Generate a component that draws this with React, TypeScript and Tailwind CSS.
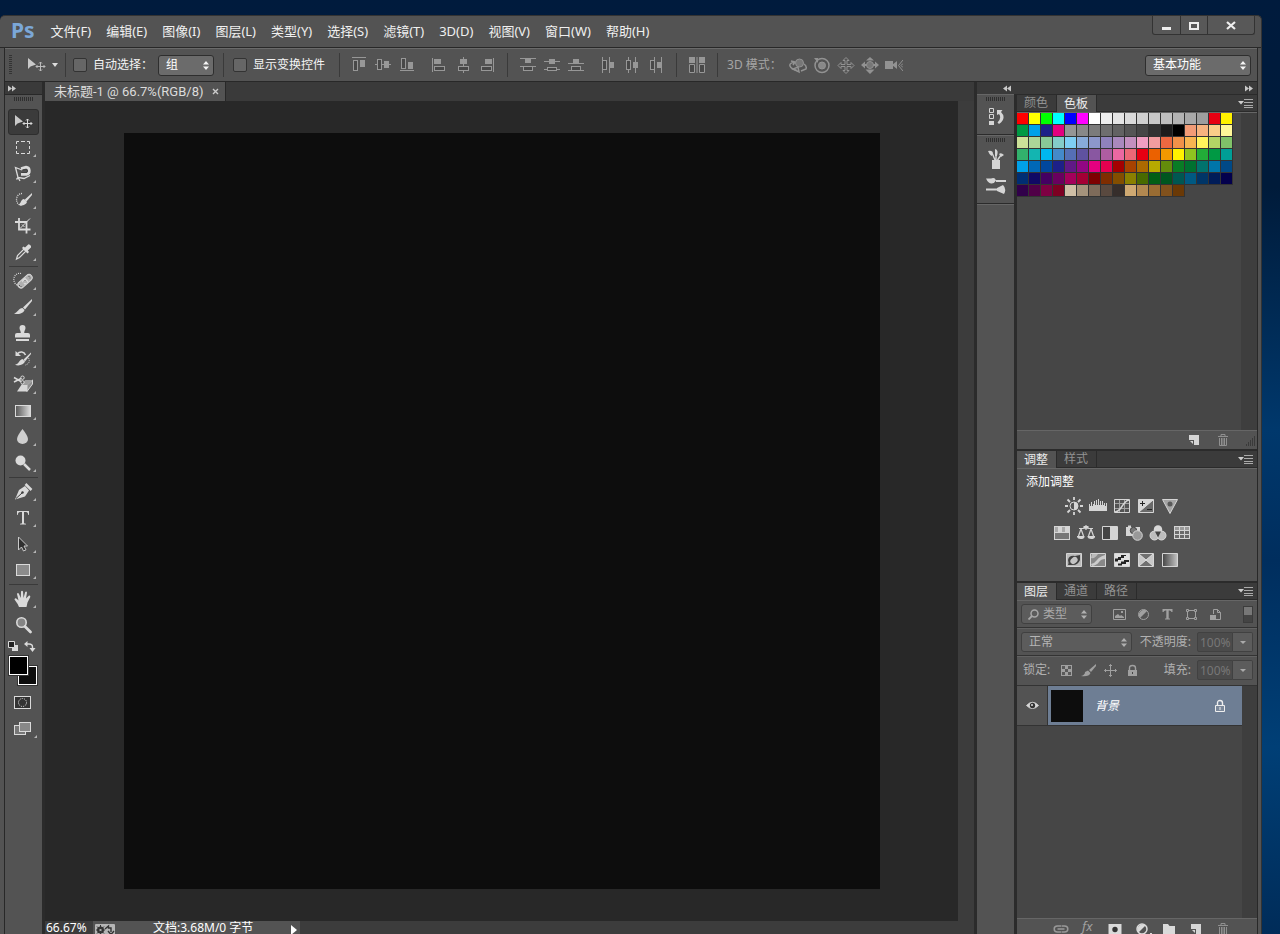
import { useState } from "react";
import type { ReactNode } from "react";

type Rect = [number, number, number, number];

interface AlignGlyph {
	label: string;
	bars: Rect[];
	box: Rect;
	fill: Rect;
}

const menus = [
	"文件(F)",
	"编辑(E)",
	"图像(I)",
	"图层(L)",
	"类型(Y)",
	"选择(S)",
	"滤镜(T)",
	"3D(D)",
	"视图(V)",
	"窗口(W)",
	"帮助(H)",
];

const swatches = [
	"ff0000 ffff00 00ff00 00ffff 0000ff ff00ff ffffff ededed e4e4e4 dadada d0d0d0 c8c8c8 bfbfbf b3b3b3 a9a9a9 9e9e9e e60012 fff100",
	"009944 00a0e9 1d2088 e4007f 959595 888888 7b7b7b 6e6e6e 626262 555555 464646 323232 1c1c1c 000000 f29b76 f6b37f facd89 fff799",
	"cce198 acd598 89c997 84ccc9 7ecef4 88abda 8c97cb 8f82bc aa89bd c490bf f19ec2 f29c9f eb6841 f19149 f8b551 fff45c b3d465 80c269",
	"32b16c 13b5b1 00b7ee 448aca 556fb5 5f52a0 8957a1 ae5da1 ea68a2 eb6877 e60012 eb6100 f39800 fff100 8fc31f 22ac38 009944 009e96",
	"00a0e9 0068b7 00479d 1d2088 601986 920783 e4007f e5004f a40000 a84200 ac6a00 b7aa00 638c0b 097c25 007130 00736d 0075a9 004986",
	"002e73 100964 440062 6a005f a4005b a40035 7d0000 7f2d00 834e00 8a8000 486a00 005e15 00561f 005752 005982 003567 001c58 03004c",
	"31004a 500047 7e0043 7d0022 cfbfa6 a4937c 7e6b5a 59493f 362e2b cfa972 b28850 996c33 81511c 6a3906",
]
	.join(" ")
	.split(" ");

const alignGroups: AlignGlyph[][] = [
	[
		{ label: "顶对齐", bars: [[1, 0, 14, 1]], box: [2, 3, 5, 11], fill: [9, 3, 5, 7] },
		{ label: "垂直居中对齐", bars: [[0, 7, 16, 1]], box: [2, 2, 5, 11], fill: [9, 4, 5, 7] },
		{ label: "底对齐", bars: [[1, 13, 14, 1]], box: [2, 1, 5, 11], fill: [9, 5, 5, 7] },
	],
	[
		{ label: "左对齐", bars: [[1, 1, 1, 14]], box: [3, 9, 11, 5], fill: [3, 2, 7, 5] },
		{ label: "水平居中对齐", bars: [[8, 0, 1, 16]], box: [3, 9, 11, 5], fill: [5, 2, 7, 5] },
		{ label: "右对齐", bars: [[14, 1, 1, 14]], box: [2, 9, 11, 5], fill: [6, 2, 7, 5] },
	],
	[
		{ label: "按顶分布", bars: [[0, 1, 16, 1], [0, 9, 16, 1]], box: [3, 9, 10, 5], fill: [5, 2, 6, 4] },
		{ label: "垂直居中分布", bars: [[0, 4, 16, 1], [0, 12, 16, 1]], box: [3, 10, 10, 4], fill: [5, 2, 6, 5] },
		{ label: "按底分布", bars: [[0, 6, 16, 1], [0, 13, 16, 1]], box: [3, 9, 10, 5], fill: [5, 2, 6, 4] },
	],
	[
		{ label: "按左分布", bars: [[2, 0, 1, 16], [9, 0, 1, 16]], box: [2, 3, 5, 10], fill: [9, 5, 5, 6] },
		{ label: "水平居中分布", bars: [[4, 0, 1, 16], [11, 0, 1, 16]], box: [2, 3, 5, 10], fill: [9, 5, 5, 6] },
		{ label: "按右分布", bars: [[6, 0, 1, 16], [13, 0, 1, 16]], box: [2, 3, 5, 10], fill: [9, 5, 5, 6] },
	],
];

const selectClass =
	"w-full appearance-none rounded-[3px] border pr-4 text-xs leading-4 outline-none";

function Svg({ children, w = 20, h = 20 }: { children: ReactNode; w?: number; h?: number }) {
	return (
		<svg width={w} height={h} viewBox={`0 0 ${w} ${h}`} fill="none" className="block shrink-0" aria-hidden="true">
			{children}
		</svg>
	);
}

function MoveCross({ x, y, r = 4.5 }: { x: number; y: number; r?: number }) {
	return (
		<g transform={`translate(${x} ${y})`} stroke="currentColor" strokeWidth="1">
			<path d={`M0 ${-r}V${r}M${-r} 0H${r}`} />
			<path
				d={`M-1.5 ${-r + 1.5}L0 ${-r}L1.5 ${-r + 1.5}M-1.5 ${r - 1.5}L0 ${r}L1.5 ${r - 1.5}M${-r + 1.5} -1.5L${-r} 0L${-r + 1.5} 1.5M${r - 1.5} -1.5L${r} 0L${r - 1.5} 1.5`}
			/>
		</g>
	);
}

function AlignIcon({ bars, box, fill }: AlignGlyph) {
	return (
		<Svg w={16} h={16}>
			{bars.map((b) => (
				<rect key={b.join()} x={b[0]} y={b[1]} width={b[2]} height={b[3]} fill="#979797" />
			))}
			<rect x={box[0] + 0.5} y={box[1] + 0.5} width={box[2] - 1} height={box[3] - 1} fill="#484848" stroke="#979797" />
			<rect x={fill[0]} y={fill[1]} width={fill[2]} height={fill[3]} fill="#979797" />
		</Svg>
	);
}

function UpDown() {
	return (
		<span className="pointer-events-none absolute inset-y-0 right-[5px] flex items-center">
			<Svg w={6} h={9}>
				<path d="M3 0L6 3.5H0zM3 9L6 5.5H0z" fill="currentColor" />
			</Svg>
		</span>
	);
}

function Divider() {
	return <span className="h-6 w-px bg-[#3a3a3a]" />;
}

function Grip() {
	return (
		<div className="flex h-[15px] items-start justify-center pt-[2px]">
			<Svg w={20} h={4}>
				<path d="M0 2H20" stroke="#2f2f2f" strokeWidth="4" strokeDasharray="1 1" />
			</Svg>
		</div>
	);
}

const toolGroups: { label: string; plain?: boolean; icon: ReactNode }[][] = [
	[
		{
			label: "移动工具",
			plain: true,
			icon: (
				<>
					<path d="M2 3V14L4.500 11.500L10 9.500z" fill="#c9c9c9" />
					<MoveCross x={14.5} y={11.5} />
				</>
			),
		},
		{
			label: "矩形选框工具",
			icon: (
				<path
					d="M3.500 6V3.500H6M8 3.500h4M14 3.500h2.500V6M16.500 8v3M16.500 13v2.500H14M12 15.500H8M6 15.500H3.500V13M3.500 11V8"
					stroke="currentColor"
				/>
			),
		},
		{
			label: "磁性套索工具",
			icon: (
				<>
					<path d="M9 6L2.500 3.500L5 13.500L11 14.500L17 11.500M5 13.500L7 17M5 13.500L3.500 15.500" stroke="currentColor" strokeWidth="1.300" />
					<path d="M8 10.300H13.500A3.600 3.600 0 0 0 13 3.200L8 4.500" stroke="currentColor" strokeWidth="2.800" />
					<path d="M8.500 8.500H13A1.500 1.500 0 0 0 13 5.500L10 6" stroke="#404040" />
				</>
			),
		},
		{
			label: "快速选择工具",
			icon: (
				<>
					<path d="M9 3.500A5.500 6 0 1 0 9 15.500" stroke="currentColor" strokeDasharray="1 1" strokeWidth="1.300" />
					<path d="M19 3L13 8.500L11.500 10L13.500 11.500L19 5z" fill="currentColor" />
					<path d="M11 9L14 12C13 15 8 16.500 5.500 14.500C8 14 7.500 9.500 11 9z" fill="currentColor" />
				</>
			),
		},
		{
			label: "裁剪工具",
			icon: (
				<>
					<path d="M6 2V13.500H17.500M2 6H13.500V17.500" stroke="currentColor" strokeWidth="1.800" />
					<path d="M7 12.500L17 2.500M9 8.500L11.500 11" stroke="currentColor" />
				</>
			),
		},
		{
			label: "吸管工具",
			icon: (
				<>
					<path d="M3.500 17L4.500 13.500L11 7L13 9L6.500 15.500z" stroke="currentColor" strokeWidth="1.200" />
					<path d="M9 6L14.500 11.500L16 10L14.800 8.500L18 5.500Q18.500 3 15.500 2.300L12 5.500L10.500 4.500z" fill="currentColor" />
				</>
			),
		},
	],
	[
		{
			label: "污点修复画笔工具",
			icon: (
				<>
					<path d="M8 2.500A5 5.500 0 1 0 5 14.500" stroke="currentColor" strokeDasharray="1 1" strokeWidth="1.200" />
					<rect x="3.500" y="7" width="17" height="6.400" rx="3.200" transform="rotate(-42 12 10.200)" fill="#b0b0b0" stroke="#d8d8d8" />
					<rect x="9.500" y="7.500" width="5" height="5.400" transform="rotate(-42 12 10.200)" fill="#d8d8d8" />
					<path d="M12 9v1M13 10.500v1M11 10.500v1M6.500 14v1M16 5v1M8 15v1M17 6.500v1" stroke="#555" />
				</>
			),
		},
		{
			label: "画笔工具",
			icon: (
				<>
					<path d="M19 2L10 10.500L12 12.500L19 4z" fill="currentColor" />
					<path d="M9.500 11L11.500 13C11 16 6 18 1 16.500C5 15.500 5.500 11 9.500 11z" fill="currentColor" />
				</>
			),
		},
		{
			label: "仿制图章工具",
			icon: (
				<path d="M9.500 2a3 3 0 0 1 3 3c0 2-1.300 2.500-1.300 5H15a2 2 0 0 1 2 2v2.500H2V12a2 2 0 0 1 2-2h3.800c0-2.500-1.300-3-1.300-5a3 3 0 0 1 3-3zM3 16h13v2H3z" fill="currentColor" />
			),
		},
		{
			label: "历史记录画笔工具",
			icon: (
				<>
					<path d="M4 5C7 2 11 2.500 12.500 6" stroke="currentColor" strokeWidth="1.600" />
					<path d="M2.500 2V7H8z" fill="currentColor" />
					<path d="M18 3.500L10.500 10.500L12 12.500L18 5z" fill="currentColor" />
					<path d="M9.500 10L12 12.500C11 15.500 6 17.500 2 15.800C6 15 6 11 9.500 10z" fill="currentColor" />
					<path d="M15.500 9Q18 14 12.500 16" stroke="currentColor" strokeDasharray="1 1" />
				</>
			),
		},
		{
			label: "背景橡皮擦工具",
			icon: (
				<>
					<path d="M9 9H19L14 16.500H4z" fill="#d8d8d8" />
					<path d="M14 10L19.500 5V9L14 16.500z" fill="#8e8e8e" stroke="#d8d8d8" />
					<path d="M12 5H18L19.500 5L14.500 10H9z" fill="#9c9c9c" />
					<path d="M1 2.500L8 6.500M1 7L8 3.500" stroke="currentColor" strokeWidth="1.500" />
					<circle cx="9.500" cy="2.700" r="1.700" stroke="currentColor" />
					<circle cx="9.500" cy="7.300" r="1.700" stroke="currentColor" />
				</>
			),
		},
		{
			label: "渐变工具",
			icon: (
				<>
					<defs>
						<linearGradient id="toolGradient">
							<stop stopColor="#555" />
							<stop offset="1" stopColor="#ddd" />
						</linearGradient>
					</defs>
					<rect x="2.500" y="4.500" width="15" height="11" fill="url(#toolGradient)" stroke="currentColor" />
				</>
			),
		},
		{ label: "模糊工具", icon: <path d="M9.500 2Q15 9 15 12A5.500 5 0 0 1 4 12Q4 9 9.500 2z" fill="#cfcfcf" /> },
		{
			label: "减淡工具",
			icon: (
				<>
					<circle cx="7.500" cy="7.500" r="5" fill="currentColor" />
					<path d="M11 11L17 17" stroke="currentColor" strokeWidth="2.500" />
				</>
			),
		},
	],
	[
		{
			label: "钢笔工具",
			icon: (
				<>
					<path d="M2 17.500L6 8L12 4L16 8.500L12 14.500z" fill="currentColor" />
					<path d="M3 16.500L9 11" stroke="#3a3a3a" />
					<circle cx="9.500" cy="10.500" r="1.200" fill="#3a3a3a" />
					<path d="M12.500 2L18.500 8" stroke="currentColor" strokeWidth="2.500" />
				</>
			),
		},
		{
			label: "横排文字工具",
			icon: <path d="M4 3H16V7H15.300Q15 4 13 4H11V15Q11 15.700 13 15.700V16.500H7V15.700Q9 15.700 9 15V4H7Q5 4 4.700 7H4z" fill="currentColor" />,
		},
		{
			label: "路径选择工具",
			icon: <path d="M5.500 3V16L8.500 13L10.500 17L13 15.800L11 12H14.500z" fill="#303030" stroke="#c9c9c9" />,
		},
		{ label: "矩形工具", icon: <rect x="3.500" y="4.500" width="13" height="11" fill="#8c8c8c" stroke="currentColor" /> },
	],
	[
		{
			label: "抓手工具",
			icon: (
				<path
					d="M6 18Q5 15 1.500 10.500Q2 8.500 4 10L5.500 11.500L4 5Q4.500 3.500 5.800 4.500L7.800 9L8 2.500Q9 1 10 2.500L10.500 9L12.200 3Q13.500 2 14 3.500L13 9.500L16 6.500Q17.500 6 17.300 8L14.500 13.500L13.500 18z"
					fill="currentColor"
				/>
			),
		},
		{
			label: "缩放工具",
			plain: true,
			icon: (
				<>
					<circle cx="8.500" cy="7.500" r="4.700" fill="#858585" stroke="currentColor" strokeWidth="1.600" />
					<path d="M12 11.500L17.500 17" stroke="currentColor" strokeWidth="2.800" strokeLinecap="round" />
				</>
			),
		},
	],
];

function Toolbox() {
	const [tool, setTool] = useState("移动工具");

	return (
		<aside className="w-[37px] shrink-0 bg-[#535353]">
			<div className="flex h-[13px] items-center border-b border-[#282828] bg-[#3a3a3a] pl-[3px] text-[#c8c8c8]">
				<button type="button" aria-label="展开工具栏">
					<Svg w={8} h={7}>
						<path d="M0 0.500L4 3.500L0 6.500zM4 0.500L8 3.500L4 6.500z" fill="currentColor" />
					</Svg>
				</button>
			</div>
			<Grip />
			<div className="mt-[-1px] flex flex-col items-center text-[#dadada]">
				{toolGroups.map((group, i) => (
					<div key={group[0].label} className="flex flex-col items-center">
						{i > 0 && <span className="my-px h-px w-[29px] bg-[#3a3a3a]" />}
						{group.map((item) => (
							<button
								key={item.label}
								type="button"
								aria-label={item.label}
								aria-pressed={tool === item.label}
								onClick={() => setTool(item.label)}
								className={`relative flex h-[26px] w-[31px] items-center justify-center rounded-[3px] border pr-px ${
									tool === item.label ? "border-[#2e2e2e] bg-[#3b3b3b]" : "border-transparent"
								}`}
							>
								<Svg>{item.icon}</Svg>
								{!item.plain && (
									<span className="absolute bottom-[3px] right-[2px]">
										<Svg w={3} h={3}>
											<path d="M3 0V3H0z" fill="#b5b5b5" />
										</Svg>
									</span>
								)}
							</button>
						))}
					</div>
				))}
				<div className="flex h-[18px] w-[31px] items-start justify-between pr-[3px] pt-[3px]">
					<button type="button" aria-label="默认前景色和背景色">
						<Svg w={11} h={11}>
							<path d="M4 4H10V10H4z" fill="#dadada" />
							<path d="M0.500 0.500H6.500V6.500H0.500z" fill="#222" stroke="#dadada" />
						</Svg>
					</button>
					<button type="button" aria-label="切换前景色和背景色">
						<Svg w={12} h={11}>
							<path d="M2 3H5Q8.500 3 8.500 6V8" stroke="#dadada" strokeWidth="1.400" />
							<path d="M3.500 0V6L0 3zM5.500 7H11.500L8.500 11z" fill="#dadada" />
						</Svg>
					</button>
				</div>
				<div className="relative h-[31px] w-[31px]">
					<button type="button" aria-label="背景色" className="absolute left-[10px] top-[10px] h-[19px] w-[19px] border border-white bg-[#0d0d0d] outline outline-[#333]" />
					<button type="button" aria-label="前景色" className="absolute left-px top-0 h-[19px] w-[19px] border border-white bg-black outline outline-[#333]" />
				</div>
				<button type="button" aria-label="以快速蒙版模式编辑" className="mt-[2px] flex h-[26px] w-[31px] items-center justify-center pr-[3px]">
					<Svg w={17} h={13}>
						<rect x="0.500" y="0.500" width="16" height="12" fill="#333" stroke="#dadada" />
						<circle cx="8.500" cy="6.500" r="4" stroke="#dadada" strokeDasharray="1.200 1" />
					</Svg>
				</button>
				<button type="button" aria-label="更改屏幕模式" className="relative flex h-[26px] w-[31px] items-center justify-center pr-[3px]">
					<Svg w={17} h={13}>
						<rect x="0.500" y="3.500" width="11" height="9" fill="#777" stroke="#dadada" />
						<rect x="5.500" y="0.500" width="11" height="9" fill="#888" stroke="#dadada" />
					</Svg>
					<span className="absolute bottom-[3px] right-[2px]">
						<Svg w={3} h={3}>
							<path d="M3 0V3H0z" fill="#b5b5b5" />
						</Svg>
					</span>
				</button>
			</div>
		</aside>
	);
}

function TitleBar() {
	return (
		<header className="flex h-8 items-center border-b border-[#282828] pl-[11px]">
			<span className="pb-1 text-[21px] font-bold leading-6 text-[#7ba7d7]">Ps</span>
			<nav className="ml-4 flex flex-1 gap-[15px] pb-[2px] text-[13px] leading-5 text-[#f0f0f0]">
				{menus.map((menu) => (
					<button key={menu} type="button" className="whitespace-nowrap">
						{menu}
					</button>
				))}
			</nav>
			<div className="mr-[6px] flex h-[19px] self-start rounded-b-[3px] border border-t-0 border-[#333] bg-[#585858]">
				<button type="button" aria-label="最小化" className="flex w-[27px] items-center justify-center">
					<Svg w={11} h={11}>
						<path d="M1 7H10V10H1z" fill="#eee" />
					</Svg>
				</button>
				<button type="button" aria-label="最大化" className="flex w-7 items-center justify-center border-x border-[#333]">
					<Svg w={10} h={9}>
						<path d="M1 2H9V8H1z" stroke="#eee" strokeWidth="2" />
					</Svg>
				</button>
				<button type="button" aria-label="关闭" className="flex w-[46px] items-center justify-center">
					<Svg w={10} h={9}>
						<path d="M1 1L9 8M9 1L1 8" stroke="#eee" strokeWidth="2.200" />
					</Svg>
				</button>
			</div>
		</header>
	);
}

const modeIcons = [
	{
		label: "旋转 3D 对象",
		icon: (
			<>
				<path d="M6 5Q0 6 1 9Q2 12 8 13.500M2 4L6 5L4 8" stroke="currentColor" strokeWidth="1.500" />
				<path d="M15 7Q18 9 17 12L12 14M4 12L10 15L9 10z" stroke="currentColor" strokeWidth="1.500" />
				<circle cx="10.500" cy="6" r="4" fill="#777" stroke="currentColor" />
			</>
		),
	},
	{
		label: "滚动 3D 对象",
		icon: (
			<>
				<circle cx="9" cy="8.500" r="7" stroke="currentColor" strokeWidth="1.500" />
				<circle cx="9" cy="8.500" r="3.500" fill="#888" stroke="currentColor" />
				<path d="M1 1H5V6z" fill="currentColor" />
			</>
		),
	},
	{
		label: "拖动 3D 对象",
		icon: (
			<path
				d="M9 0.500L12 3.500H10V7.500H14V5.500L17 8.500L14 11.500V9.500H10V13.500H12L9 16.500L6 13.500H8V9.500H4V11.500L1 8.500L4 5.500V7.500H8V3.500H6z"
				stroke="currentColor"
			/>
		),
	},
	{
		label: "滑动 3D 对象",
		icon: (
			<>
				<path d="M9 0L13 3.500H5zM0 8L4 4.500V7H14V4.500L18 8L14 11.500V9H4V11.500zM9 17L4.500 12.500H13.500z" fill="currentColor" />
				<circle cx="9" cy="8" r="3.500" fill="#777" stroke="currentColor" />
			</>
		),
	},
	{
		label: "缩放 3D 对象",
		icon: (
			<>
				<path d="M0 4H8V12H0zM7 8L12 4V12z" fill="currentColor" />
				<path d="M18 3L13.500 8.500L18 14M18 6.500L16 8.500L18 10.500" stroke="currentColor" />
			</>
		),
	},
];

function OptionsBar() {
	return (
		<div className="flex h-[34px] items-center border-b border-t border-b-[#282828] border-t-[#6a6a6a] pl-1 pr-[6px] text-xs leading-4 text-[#f4f4f4]">
			<Svg w={3} h={20}>
				<path d="M1.500 0V20" stroke="#333" strokeWidth="3" strokeDasharray="1 1" />
			</Svg>
			<button type="button" aria-label="工具预设" className="ml-[14px] mr-[7px] flex items-center gap-[5px] text-[#bbb]">
				<Svg w={21} h={16}>
					<path d="M2 1V12L4.500 9.500L10 7.500z" fill="#c9c9c9" />
					<MoveCross x={14.5} y={9.5} />
				</Svg>
				<Svg w={6} h={4}>
					<path d="M0 0H6L3 4z" fill="#ddd" />
				</Svg>
			</button>
			<Divider />
			<label className="ml-[7px] flex items-center gap-[6px] whitespace-nowrap">
				<input type="checkbox" className="h-[14px] w-[14px] appearance-none rounded-[2px] border border-[#333] bg-[#666] checked:bg-[#aaa]" />
				自动选择：
			</label>
			<span className="relative ml-[5px] w-14">
				<select aria-label="自动选择" className={`${selectClass} h-[21px] border-[#2e2e2e] bg-[#6b6b6b] pl-[7px] text-white`}>
					<option>组</option>
					<option>图层</option>
				</select>
				<UpDown />
			</span>
			<span className="ml-[9px]" />
			<Divider />
			<label className="ml-[9px] mr-[14px] flex items-center gap-[6px] whitespace-nowrap">
				<input type="checkbox" className="h-[14px] w-[14px] appearance-none rounded-[2px] border border-[#333] bg-[#666] checked:bg-[#aaa]" />
				显示变换控件
			</label>
			<Divider />
			<div className="ml-[7px] flex items-center gap-[8px]">
				{alignGroups.map((group, i) => (
					<div key={group[0].label} className="flex items-center gap-[8px]">
						{i === 2 && <Divider />}
						<div className="flex">
							{group.map((glyph) => (
								<button key={glyph.label} type="button" aria-label={glyph.label} className="flex w-6 justify-center">
									<AlignIcon {...glyph} />
								</button>
							))}
						</div>
					</div>
				))}
				<Divider />
				<button type="button" aria-label="自动对齐图层" className="flex w-6 justify-center">
					<Svg w={16} h={16}>
						<path d="M0 0H6V6H0zM10 0H16V6H10z" fill="#979797" />
						<path d="M0.500 7.500H5.500V15.500H0.500zM10.500 7.500H15.500V15.500H10.500z" fill="#484848" stroke="#979797" />
						<path d="M8 0V16" stroke="#979797" />
					</Svg>
				</button>
				<Divider />
			</div>
			<span className="ml-[9px] whitespace-nowrap text-[#a5a5a5]">3D 模式：</span>
			<div className="ml-1 flex text-[#929292]">
				{modeIcons.map((m) => (
					<button key={m.label} type="button" aria-label={m.label} className="flex w-6 justify-center">
						<Svg w={18} h={17}>{m.icon}</Svg>
					</button>
				))}
			</div>
			<span className="relative ml-auto w-[106px]">
				<select aria-label="工作区" className={`${selectClass} h-[21px] border-[#2e2e2e] bg-[#6b6b6b] pl-[7px] text-white`}>
					<option>基本功能</option>
					<option>绘画</option>
				</select>
				<UpDown />
			</span>
		</div>
	);
}

function DocumentArea() {
	return (
		<main className="flex min-w-0 flex-1 flex-col bg-[#282828]">
			<div className="flex h-[19px] shrink-0 bg-[#3a3a3a]">
				<div className="flex items-center gap-2 border-r border-[#282828] bg-[#535353] pl-[9px] pr-[6px] text-[#dcdcdc]">
					<span className="whitespace-nowrap font-[Roboto,'Noto_Sans_CJK_SC',sans-serif] text-[13px] leading-4">
						未标题-1 @ 66.7%(RGB/8)
					</span>
					<button type="button" aria-label="关闭文档">
						<Svg w={7} h={7}>
							<path d="M1 1L6 6M6 1L1 6" stroke="#ccc" strokeWidth="1.400" />
						</Svg>
					</button>
				</div>
			</div>
			<div className="flex min-h-0 flex-1">
				<div className="flex min-w-0 flex-1 justify-center py-8">
					<div className="aspect-square h-full bg-[#0d0d0d]" />
				</div>
				<div className="w-4 bg-[#3c3c3c]" />
			</div>
			<div className="flex h-[13px] shrink-0 items-stretch bg-[#3c3c3c] text-xs leading-3 text-white">
				<span className="w-12 whitespace-nowrap pl-px pt-px">66.67%</span>
				<div className="flex w-[207px] items-start bg-[#535353]">
					<span className="ml-[2px] mt-[3px]">
						<Svg w={20} h={10}>
							<rect width="20" height="12" rx="1" fill="#b5b5b5" />
							<circle cx="5.500" cy="6" r="2.500" stroke="#333" strokeWidth="2" />
							<path d="M5.500 1V11M1 6H10M2 2.500L9 9.500M9 2.500L2 9.500" stroke="#333" />
							<circle cx="5.500" cy="6" r="1" fill="#b5b5b5" />
							<path d="M10 5L13.500 2V4H16V8M19 7L16 10.500L13 7" stroke="#333" strokeWidth="1.400" />
						</Svg>
					</span>
					<span className="flex-1 whitespace-nowrap pl-[38px] pt-px">文档:3.68M/0 字节</span>
					<button type="button" aria-label="状态选项" className="mr-[3px] mt-1">
						<Svg w={6} h={9}>
							<path d="M0 0L6 5L0 10z" fill="white" />
						</Svg>
					</button>
				</div>
			</div>
		</main>
	);
}

function TabBar({ tabs, active }: { tabs: string[]; active: string }) {
	return (
		<div className="flex h-[18px] shrink-0 items-stretch border-b border-b-[#666] bg-[#3b3b3b] text-xs leading-4">
			{tabs.map((tab) => (
				<button
					key={tab}
					type="button"
					className={`flex w-10 items-center border-r border-[#2b2b2b] pl-[7px] ${
						tab === active ? "bg-[#535353] text-[#ededed]" : "border-b text-[#929292]"
					}`}
				>
					{tab}
				</button>
			))}
			<div className="flex flex-1 items-center justify-end border-b border-[#2b2b2b] pr-1">
				<button type="button" aria-label="面板菜单">
					<Svg w={15} h={9}>
						<path d="M0 2H6L3 5.500z" fill="#ccc" />
						<path d="M6 0.500H15M6 3.500H15M6 6.500H15M6 8.500H15" stroke="#aaa" />
					</Svg>
				</button>
			</div>
		</div>
	);
}

const newIcon = (
	<>
		<path d="M5 5H15V15H10V10H5z" fill="#d5d5d5" />
		<path d="M6 11H9V14z" fill="#d5d5d5" />
	</>
);

const trashIcon = (
	<>
		<path d="M5 6.500H15M8 6V4.500H12V6" stroke="#909090" />
		<path d="M6.500 8V15.500H13.500V8M8.500 8V15M11.500 8V15M10 8V15" stroke="#909090" />
	</>
);

function SwatchPanel() {
	return (
		<section className="flex shrink-0 flex-col bg-[#535353]">
			<TabBar tabs={["颜色", "色板"]} active="色板" />
			<div className="flex h-[317px] bg-[#464646]">
				<div className="flex-1">
					<div className="grid w-[216px] grid-cols-[repeat(18,12px)]">
						{swatches.map((color, i) => (
							<button
								key={i}
								type="button"
								aria-label={`#${color}`}
								className="h-3 border-b border-r border-[#333]"
								style={{ backgroundColor: `#${color}` }}
							/>
						))}
					</div>
				</div>
				<div className="w-4 bg-[#3e3e3e]" />
			</div>
			<div className="flex h-[19px] items-center justify-end gap-[9px] border-t border-[#666] pb-[2px]">
				<button type="button" aria-label="创建前景色的新色板">
					<Svg h={19}>{newIcon}</Svg>
				</button>
				<button type="button" aria-label="删除色板">
					<Svg h={19}>{trashIcon}</Svg>
				</button>
				<span className="self-end">
					<Svg w={15} h={12}>
						<path d="M12 2h1M10 4h3M8 6h5M6 8h7M4 10h9" stroke="#222" strokeDasharray="1 1" />
					</Svg>
				</span>
			</div>
		</section>
	);
}

const adjustmentRows: { pad: string; items: { label: string; icon: ReactNode }[] }[] = [
	{
		pad: "pl-[45px]",
		items: [
			{
				label: "亮度/对比度",
				icon: (
					<>
						<circle cx="9" cy="9" r="4" stroke="currentColor" />
						<path d="M9 5A4 4 0 0 1 9 13z" fill="currentColor" />
						<path d="M9 0V3M9 15V18M0 9H3M15 9H18M2.500 2.500L5 5M13 13L15.500 15.500M15.500 2.500L13 5M5 13L2.500 15.500" stroke="currentColor" strokeWidth="1.800" />
					</>
				),
			},
			{ label: "色阶", icon: <path d="M0 14V7H1V9H2V5H3V9H4V7H5V4H6V8H7V3H8V8H9V2H10V8H11V4H12V8H13V4H14V8H15V6H16V9H17V6H18V14z" fill="currentColor" /> },
			{
				label: "曲线",
				icon: (
					<>
						<path d="M1.500 2.500H16.500V15.500H1.500z" stroke="currentColor" />
						<path d="M2 6.500H16M2 11.500H16M6.500 3V15M11.500 3V15" stroke="#a0a0a0" />
						<path d="M2 15C9 15 9 4 16 3" stroke="currentColor" strokeWidth="1.500" />
					</>
				),
			},
			{
				label: "曝光度",
				icon: (
					<>
						<path d="M1.500 2.500H16.500V15.500H1.500z" fill="currentColor" stroke="currentColor" />
						<path d="M16 3V15H2z" fill="#6a6a6a" />
						<path d="M16 3L2 15" stroke="#ddd" />
						<path d="M3 6.500H8M5.500 4V9M10 12.500H15" stroke="#222" />
					</>
				),
			},
			{
				label: "自然饱和度",
				icon: (
					<>
						<path d="M1.500 2.500H16.500L9 16.500z" fill="#a5a5a5" stroke="currentColor" />
						<circle cx="9" cy="7" r="2.500" fill="#5a5a5a" />
					</>
				),
			},
		],
	},
	{
		pad: "pl-[33px]",
		items: [
			{
				label: "色相/饱和度",
				icon: (
					<>
						<path d="M1 2H17V16H1z" fill="currentColor" />
						<path d="M2 3H5V8H2zM9 3H12V8H9z" fill="#aaa" />
						<path d="M2 9H16V15H2z" fill="#777" />
					</>
				),
			},
			{
				label: "色彩平衡",
				icon: (
					<>
						<path d="M9 1V6M2 4.500H6L9 3.500L12 4.500H16M4 5L1.500 12M4 5L6.500 12M14 5L11.500 12M14 5L16.500 12" stroke="currentColor" strokeWidth="1.200" />
						<path d="M0 12H7.500V13Q7 15 3.700 15Q0.500 15 0 13zM10.500 12H18V13Q17.500 15 14.200 15Q11 15 10.500 13zM6.500 2H11.500V4.500H6.500z" fill="currentColor" />
					</>
				),
			},
			{
				label: "黑白",
				icon: (
					<>
						<path d="M1.500 2.500H16.500V15.500H1.500z" fill="#444" stroke="currentColor" />
						<path d="M9 3H16V15H9z" fill="currentColor" />
					</>
				),
			},
			{
				label: "照片滤镜",
				icon: (
					<>
						<path d="M1 3H3V1.500H6V3H15V12H1z" fill="currentColor" />
						<circle cx="8.500" cy="6.500" r="3.200" fill="#777" stroke="#444" />
						<circle cx="12.500" cy="11.500" r="4.800" fill="#999" stroke="currentColor" />
					</>
				),
			},
			{
				label: "通道混合器",
				icon: (
					<>
						<circle cx="9" cy="5.500" r="4.200" fill="#d8d8d8" />
						<circle cx="5.500" cy="11.500" r="4.500" fill="#bdbdbd" stroke="#dadada" />
						<circle cx="12.500" cy="11.500" r="4.500" fill="#bdbdbd" stroke="#dadada" />
						<path d="M6 7.500H12L9 13.500z" fill="#444" />
					</>
				),
			},
			{
				label: "颜色查找",
				icon: (
					<>
						<path d="M1 2H17V15H1z" fill="currentColor" />
						<path d="M2 3H6V6H2zM7 3H11V6H7zM12 3H16V6H12z" fill="#999" />
						<path d="M2 7H6V10H2zM7 7H11V10H7zM12 7H16V10H12zM2 11H6V14H2zM7 11H11V14H7zM12 11H16V14H12z" fill="#6c6c6c" />
					</>
				),
			},
		],
	},
	{
		pad: "pl-[45px]",
		items: [
			{
				label: "反相",
				icon: (
					<>
						<path d="M1.500 2.500H16.500V15.500H1.500z" fill="#bbb" stroke="currentColor" />
						<path d="M15 4V9Q13 14 8 14H3Q4 12 3 9Q4 4 10 5z" fill="#404040" />
						<ellipse cx="9" cy="9.500" rx="4" ry="3" transform="rotate(-40 9 9.500)" fill="#c4c4c4" />
					</>
				),
			},
			{
				label: "色调分离",
				icon: (
					<>
						<path d="M1.500 2.500H16.500V15.500H1.500z" fill="#888" stroke="currentColor" />
						<path d="M2 13Q6 12 8 9T16 4V8Q12 8 10 11T3 15z" fill="#ccc" />
						<path d="M2 7Q6 8 9 3H3z" fill="#bbb" />
					</>
				),
			},
			{
				label: "阈值",
				icon: (
					<>
						<path d="M1.500 2.500H16.500V15.500H1.500z" fill="#e0e0e0" stroke="currentColor" />
						<path d="M2 7.500H5V6H8V4H13V5H11V7H8V9H5V10.500H2zM5 12.500H8V10.500H11V9H16V11H13V13H9V14.500H5z" fill="#222" />
					</>
				),
			},
			{
				label: "可选颜色",
				icon: (
					<>
						<path d="M1.500 2.500H16.500V15.500H1.500z" fill="#707070" stroke="currentColor" />
						<path d="M2 3L9 9L2 15zM16 3L9 9L16 15z" fill="#c8c8c8" />
						<path d="M2 3L16 15M16 3L2 15" stroke="#ddd" />
					</>
				),
			},
			{
				label: "渐变映射",
				icon: (
					<>
						<defs>
							<linearGradient id="mapGradient">
								<stop stopColor="#444" />
								<stop offset="1" stopColor="#c4c4c4" />
							</linearGradient>
						</defs>
						<path d="M1.500 2.500H16.500V15.500H1.500z" fill="url(#mapGradient)" stroke="currentColor" />
					</>
				),
			},
		],
	},
];

function AdjustmentPanel() {
	return (
		<section className="shrink-0 bg-[#535353] pb-2">
			<TabBar tabs={["调整", "样式"]} active="调整" />
			<h2 className="pb-[2px] pl-[9px] pt-[5px] text-xs leading-4 text-white">添加调整</h2>
			{adjustmentRows.map((row) => (
				<div key={row.items[0].label} className={`flex h-[27px] items-center text-[#d5d5d5] ${row.pad}`}>
					{row.items.map((item) => (
						<button key={item.label} type="button" aria-label={item.label} className="flex w-6 justify-center">
							<Svg w={18} h={18}>{item.icon}</Svg>
						</button>
					))}
				</div>
			))}
		</section>
	);
}

const filterIcons = [
	{
		label: "像素图层滤镜",
		icon: (
			<>
				<path d="M1.500 2.500H13.500V12.500H1.500z" stroke="currentColor" />
				<path d="M3 11V9L6 7L8 9L9 8L12 10V11z" fill="currentColor" />
				<path d="M9 4H11V6H9z" fill="currentColor" />
			</>
		),
	},
	{
		label: "调整图层滤镜",
		icon: (
			<>
				<circle cx="7.500" cy="7.500" r="5" stroke="currentColor" />
				<path d="M11 4A5 5 0 0 0 4 11z" fill="currentColor" />
			</>
		),
	},
	{
		label: "文字图层滤镜",
		icon: <path d="M2.500 2H12.500V5H11.500Q11 3.500 9.500 3.500H8.700V11.500H10V12.500H5V11.500H6.300V3.500H5.500Q4 3.500 3.500 5H2.500z" fill="currentColor" />,
	},
	{
		label: "形状图层滤镜",
		icon: (
			<path d="M3.500 4V11M11.500 4V11M4 3.500H11M4 11.500H11M2.500 2.500H4.500V4.500H2.500zM10.500 2.500H12.500V4.500H10.500zM2.500 10.500H4.500V12.500H2.500zM10.500 10.500H12.500V12.500H10.500z" stroke="currentColor" />
		),
	},
	{
		label: "智能对象滤镜",
		icon: (
			<>
				<path d="M5.500 7V2.500H9.500L12.500 5.500V12.500H8" stroke="currentColor" />
				<path d="M9.500 2.500V5.500H12.500" stroke="currentColor" />
				<path d="M2 8H8V13H2z" fill="currentColor" />
			</>
		),
	},
];

const lockIcons = [
	{
		label: "锁定透明像素",
		icon: (
			<>
				<path d="M2 2H13V13H2z" fill="currentColor" />
				<path d="M3 3h3v3h3v3h3v3H9V9H6V6H3zM9 3h3v3H9zM3 9h3v3H3z" fill="#5a5a5a" />
			</>
		),
	},
	{
		label: "锁定图像像素",
		icon: (
			<>
				<path d="M15 1L8 7L10 9L15 3z" fill="currentColor" />
				<path d="M7 7.500L9.500 10Q8 14 0 13Q4 12 4 9Z" fill="currentColor" />
			</>
		),
	},
	{ label: "锁定位置", icon: <MoveCross x={7.5} y={7.5} r={6} /> },
	{
		label: "锁定全部",
		icon: (
			<>
				<path d="M3 7H12V13H3z" fill="currentColor" />
				<path d="M4.500 7V5Q4.500 2.500 7.500 2.500T10.500 5V7" stroke="currentColor" strokeWidth="1.400" />
				<path d="M7 9H8V11H7z" fill="#444" />
			</>
		),
	},
];

const layerActions = [
	{
		label: "链接图层",
		icon: <path d="M10 7H6.500A3.300 3 0 0 0 6.500 13H10M10.500 7H13.500A3.300 3 0 0 1 13.500 13H10.500M6.500 10H13.500" stroke="#999" strokeWidth="1.500" />,
	},
	{
		label: "添加图层样式",
		icon: (
			<text x="4" y="12" fill="#a0a0a0" fontSize="13" fontStyle="italic" fontFamily="Noto Sans">
				fx
			</text>
		),
	},
	{
		label: "添加图层蒙版",
		icon: (
			<>
				<path d="M3.500 5H16.500V16H3.500z" fill="#dadada" />
				<circle cx="10" cy="10.500" r="2.700" fill="#333" />
			</>
		),
	},
	{
		label: "创建新的填充或调整图层",
		icon: (
			<>
				<circle cx="10" cy="10" r="5" stroke="#dadada" strokeWidth="1.500" />
				<path d="M13.500 6.500A5 5 0 0 0 6.500 13.500z" fill="#dadada" />
				<path d="M18 14H20V16H18z" fill="#dadada" />
			</>
		),
	},
	{ label: "创建新组", icon: <path d="M4 5H9L10.500 7H16V16H4z" fill="#dadada" /> },
	{ label: "创建新图层", icon: newIcon },
	{ label: "删除图层", icon: trashIcon },
];

function PercentField({ id, label }: { id: string; label: string }) {
	return (
		<div className="ml-auto flex items-center">
			<label htmlFor={id} className="mr-[6px] whitespace-nowrap">
				{label}
			</label>
			<input
				id={id}
				type="text"
				defaultValue="100%"
				className="h-5 w-9 rounded-l-[2px] border border-[#414141] bg-[#4b4b4b] pl-[2px] text-xs leading-4 text-[#777] outline-none"
			/>
			<button type="button" aria-label={`${label}选项`} className="flex h-5 w-5 items-center justify-center rounded-r-[2px] border border-l-0 border-[#414141] bg-[#5c5c5c]">
				<Svg w={6} h={3}>
					<path d="M0 0H6L3 3z" fill="#aaa" />
				</Svg>
			</button>
		</div>
	);
}

function LayersPanel() {
	return (
		<section className="flex min-h-0 flex-1 flex-col bg-[#535353] text-xs leading-4 text-[#b0b0b0]">
			<TabBar tabs={["图层", "通道", "路径"]} active="图层" />
			<div className="flex h-[27px] shrink-0 items-center border-b border-[#333] px-1">
				<span className="relative w-[71px]">
					<select aria-label="图层过滤" className={`${selectClass} h-5 border-[#404040] bg-[#5c5c5c] pl-[21px] text-[#aaa]`}>
						<option>类型</option>
						<option>名称</option>
					</select>
					<span className="pointer-events-none absolute inset-y-0 left-[7px] flex items-center">
						<Svg w={11} h={11}>
							<circle cx="6.500" cy="4.500" r="3.500" stroke="#a8a8a8" strokeWidth="1.500" />
							<path d="M4 7L0.500 10.500" stroke="#a8a8a8" strokeWidth="1.800" />
						</Svg>
					</span>
					<UpDown />
				</span>
				<div className="ml-[15px] flex text-[#a0a0a0]">
					{filterIcons.map((f) => (
						<button key={f.label} type="button" aria-label={f.label} className="flex w-6 justify-center">
							<Svg w={15} h={15}>{f.icon}</Svg>
						</button>
					))}
				</div>
				<button type="button" aria-label="打开或关闭图层过滤" className="ml-auto flex h-[17px] w-[10px] items-start border border-[#3c3c3c] bg-[#444]">
					<span className="h-2 w-2 bg-[#777]" />
				</button>
			</div>
			<div className="flex h-7 shrink-0 items-center border-b border-t border-b-[#333] border-t-[#626262] px-1">
				<span className="relative w-[111px]">
					<select aria-label="混合模式" className={`${selectClass} h-5 border-[#404040] bg-[#5c5c5c] pl-[7px] text-[#b5b5b5]`}>
						<option>正常</option>
						<option>正片叠底</option>
					</select>
					<UpDown />
				</span>
				<PercentField id="opacity" label="不透明度:" />
			</div>
			<div className="flex h-[30px] shrink-0 items-center border-b border-t border-b-[#333] border-t-[#626262] pb-[2px] pl-[6px] pr-1">
				<span>锁定:</span>
				<div className="ml-[5px] flex text-[#a0a0a0]">
					{lockIcons.map((l) => (
						<button key={l.label} type="button" aria-label={l.label} className="flex w-[22px] justify-center">
							<Svg w={15} h={15}>{l.icon}</Svg>
						</button>
					))}
				</div>
				<PercentField id="fill" label="填充:" />
			</div>
			<div className="flex min-h-0 flex-1 bg-[#464646]">
				<div className="flex-1">
					<div className="flex h-10 border-b border-[#333] bg-[#6e7e94]">
						<button type="button" aria-label="指示图层可见性" className="flex w-[31px] items-center justify-center border-r border-[#333] bg-[#535353]">
							<Svg w={13} h={11}>
								<path d="M0.500 5.500Q6.500 -1 12.500 5.500Q6.500 11.500 0.500 5.500z" fill="#ddd" stroke="#ccc" />
								<circle cx="6.500" cy="5.500" r="2.700" fill="#333" />
								<circle cx="6" cy="5" r="1" fill="#ddd" />
							</Svg>
						</button>
						<button type="button" className="flex flex-1 items-center gap-3 pl-[3px] text-white">
							<span className="h-8 w-8 bg-[#0d0d0d]" />
							<span className="italic">背景</span>
							<span className="ml-auto mr-4">
								<Svg w={12} h={14}>
									<path d="M1.500 6.500H10.500V12.500H1.500z" fill="#7b889a" stroke="#eee" />
									<path d="M3.500 6V4Q3.500 1.500 6 1.500T8.500 4V6" stroke="#eee" strokeWidth="1.400" />
									<path d="M5.500 8H6.500V11H5.500z" fill="#eee" />
								</Svg>
							</span>
						</button>
					</div>
				</div>
				<div className="w-[15px] bg-[#3e3e3e]" />
			</div>
			<div className="flex h-4 shrink-0 items-start justify-center gap-[7px] overflow-hidden border-t border-[#666] pl-[9px]">
				{layerActions.map((a) => (
					<button key={a.label} type="button" aria-label={a.label}>
						<Svg>{a.icon}</Svg>
					</button>
				))}
			</div>
		</section>
	);
}

function IconDock() {
	return (
		<div className="flex w-[37px] shrink-0 flex-col gap-px text-[#d5d5d5]">
			<div className="h-10 border-t border-[#666] bg-[#535353]">
				<Grip />
				<button type="button" aria-label="历史记录" className="mx-auto mt-[-2px] block">
					<Svg h={18}>
						<path d="M3.500 0.500H7.500V4.500H3.500zM3.500 6.500H7.500V10.500H3.500z" stroke="currentColor" />
						<path d="M3 13H8V17H3z" fill="currentColor" />
						<path d="M11 2H16.500L15 4Q21 10 13 16L11.500 14.500Q16 10 13 6L11 7z" fill="currentColor" />
					</Svg>
				</button>
			</div>
			<div className="h-[68px] border-t border-[#666] bg-[#535353]">
				<Grip />
				<button type="button" aria-label="画笔" className="mx-auto mt-[-6px] block">
					<Svg h={28}>
						<path d="M6 15H14V24H6z" fill="currentColor" />
						<path d="M9 15L6.500 9M10 15L10 9M11.500 15L15 10" stroke="currentColor" strokeWidth="1.400" />
						<path d="M2 6Q7 5 7 9L5.500 11Q3 9 2 6zM9 4Q13 5 11 11H9zM13 9Q15 7 18 10L15 12z" fill="currentColor" />
					</Svg>
				</button>
				<button type="button" aria-label="画笔预设" className="mx-auto mt-[3px] block">
					<Svg h={20}>
						<path d="M0 2.500H5Q9 1 10 4.500Q8 8 5 7.500Q2 7 0 2.500zM10 4H20V6H10z" fill="currentColor" />
						<path d="M0 12.500H11V14.500H0zM11 12L17 9Q21 13 18 18L11 15z" fill="currentColor" />
					</Svg>
				</button>
			</div>
			<div className="flex-1 border-t border-[#666] bg-[#535353]" />
		</div>
	);
}

export default function App() {
	return (
		<div className="h-screen overflow-hidden bg-[linear-gradient(180deg,#001b3d_0%,#001b3a_20%,#00386c_46%,#002e5e_60%,#003f76_80%,#002c59_100%)] pr-[18px] pt-[15px] font-['Noto_Sans','Noto_Sans_CJK_SC',sans-serif]">
			<div className="flex h-full flex-col overflow-hidden rounded-t-[5px] border-r border-t border-[#333] bg-[#535353]">
				<TitleBar />
				<div className="ml-1 mr-[3px] flex min-h-0 flex-1 flex-col border-x border-[#282828]">
					<OptionsBar />
					<div className="flex min-h-0 flex-1 bg-[#2b2b2b]">
						<Toolbox />
						<div className="w-[3px] shrink-0" />
						<DocumentArea />
						<div className="ml-[3px] flex w-[280px] shrink-0 flex-col">
							<div className="flex h-[12px] shrink-0 items-center justify-between bg-[#3a3a3a] pl-[26px] pr-1 text-[#c8c8c8]">
								<button type="button" aria-label="展开面板">
									<Svg w={8} h={7}>
										<path d="M4 0.500L0 3.500L4 6.500zM8 0.500L4 3.500L8 6.500z" fill="currentColor" />
									</Svg>
								</button>
								<button type="button" aria-label="折叠为图标">
									<Svg w={8} h={7}>
										<path d="M0 0.500L4 3.500L0 6.500zM4 0.500L8 3.500L4 6.500z" fill="currentColor" />
									</Svg>
								</button>
							</div>
							<div className="flex min-h-0 flex-1 gap-[3px]">
								<IconDock />
								<div className="flex min-w-0 flex-1 flex-col gap-[2px] pt-px">
									<SwatchPanel />
									<AdjustmentPanel />
									<LayersPanel />
								</div>
							</div>
						</div>
					</div>
				</div>
			</div>
		</div>
	);
}
